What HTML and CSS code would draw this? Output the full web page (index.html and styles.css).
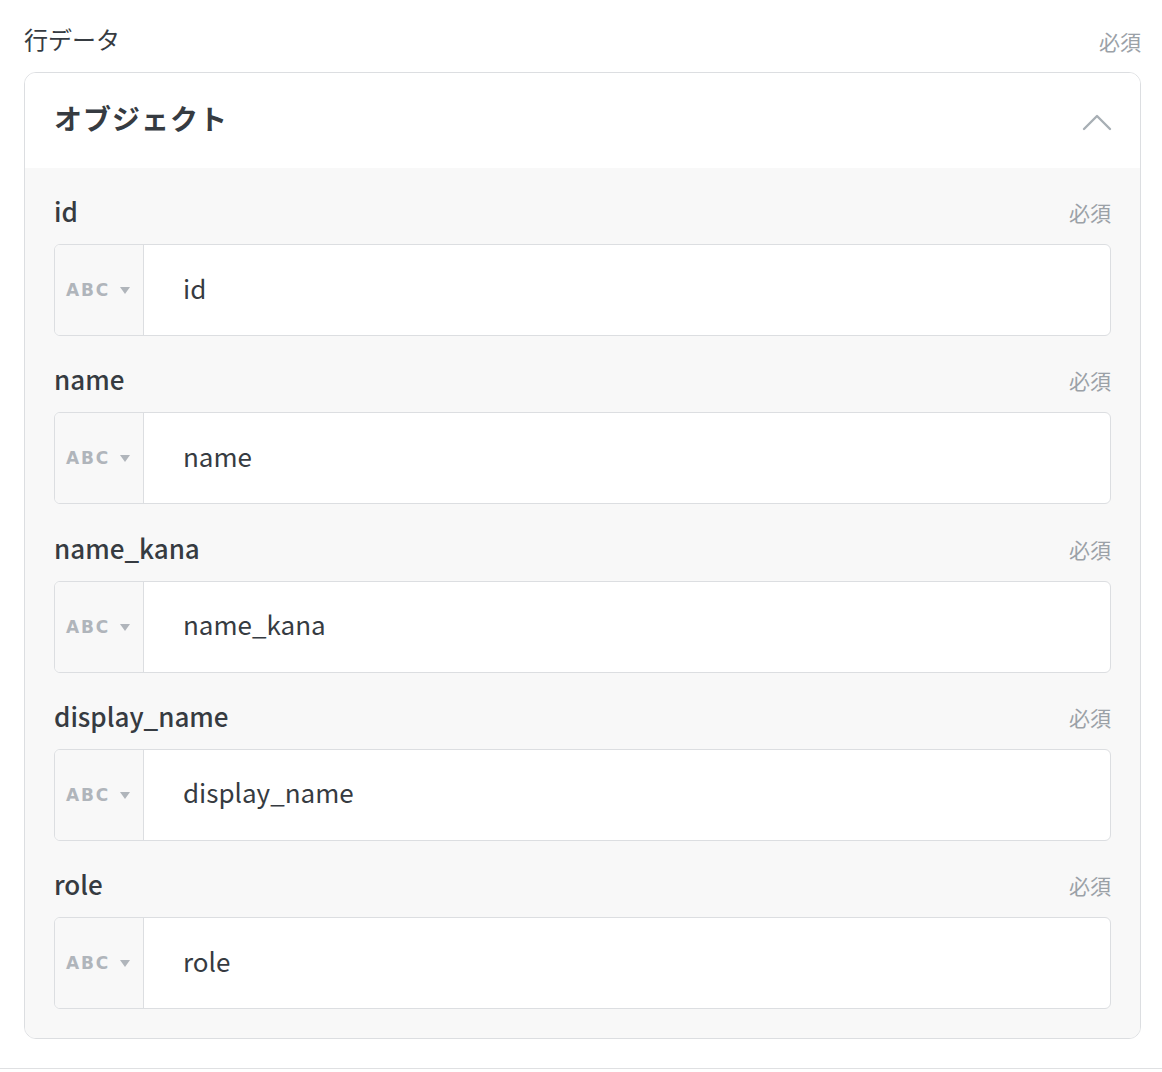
FILE: index.html
```html
<!DOCTYPE html>
<html lang="ja">
<head>
<meta charset="utf-8">
<link rel="stylesheet" href="styles.css">
</head>
<body>
<div class="page">
  <div class="top-row">
    <span class="title">行データ</span>
    <span class="req">必須</span>
  </div>
  <div class="card">
    <div class="card-head">
      <span class="card-title">オブジェクト</span>
      <svg class="chev" width="30" height="20" viewBox="0 0 30 20"><path d="M2 17 L15 4 L28 17" fill="none" stroke="#a8afb5" stroke-width="2.4" stroke-linecap="round" stroke-linejoin="round"/></svg>
    </div>
    <div class="card-body">
      <div class="field">
        <div class="field-head"><span class="label">id</span><span class="req">必須</span></div>
        <div class="input"><div class="type"><span class="abc">ABC</span><span class="tri"></span></div><div class="val">id</div></div>
      </div>
      <div class="field">
        <div class="field-head"><span class="label">name</span><span class="req">必須</span></div>
        <div class="input"><div class="type"><span class="abc">ABC</span><span class="tri"></span></div><div class="val">name</div></div>
      </div>
      <div class="field">
        <div class="field-head"><span class="label">name_kana</span><span class="req">必須</span></div>
        <div class="input"><div class="type"><span class="abc">ABC</span><span class="tri"></span></div><div class="val">name_kana</div></div>
      </div>
      <div class="field">
        <div class="field-head"><span class="label">display_name</span><span class="req">必須</span></div>
        <div class="input"><div class="type"><span class="abc">ABC</span><span class="tri"></span></div><div class="val">display_name</div></div>
      </div>
      <div class="field">
        <div class="field-head"><span class="label">role</span><span class="req">必須</span></div>
        <div class="input"><div class="type"><span class="abc">ABC</span><span class="tri"></span></div><div class="val">role</div></div>
      </div>
    </div>
  </div>
</div>
<div class="rule"></div>
</body>
</html>
```
FILE: styles.css
```css
* { box-sizing: border-box; }
body {
  margin: 0;
  background: #fff;
  font-family: "Noto Sans CJK JP", "Noto Sans", sans-serif;
  color: #363b41;
}
.page { padding: 22px 21px 0 24px; }
.top-row {
  display: flex;
  justify-content: space-between;
  align-items: center;
  height: 36px;
  margin-bottom: 14px;
}
.title { font-size: 24px; line-height: 36px; padding-bottom: 2px; }
.req { font-size: 21px; color: #9ba1a7; line-height: 36px; }
.top-row .req { padding-top: 2px; }
.card {
  border: 1px solid #dcdee1;
  border-radius: 12px;
  overflow: hidden;
}
.card-head {
  height: 95px;
  background: #fff;
  display: flex;
  align-items: center;
  justify-content: space-between;
  padding: 0 28px 0 29px;
}
.card-title { font-size: 28px; font-weight: 700; letter-spacing: 1px; padding-bottom: 6px; }
.chev { margin-top: 2px; }
.card-body {
  background: #f8f8f8;
  padding: 26px 29px 29px 29px;
  display: flex;
  flex-direction: column;
  gap: 26.25px;
}
.field-head {
  display: flex;
  justify-content: space-between;
  align-items: center;
  height: 36px;
  margin-bottom: 14px;
}
.label { font-size: 26px; font-weight: 500; line-height: 36px; padding-bottom: 2px; }
.field-head .req { padding-top: 0; }
.input {
  display: flex;
  height: 92px;
  border: 1px solid #dcdee1;
  border-radius: 6px;
  overflow: hidden;
  background: #fff;
}
.type {
  width: 89px;
  background: #f8f8f8;
  border-right: 1px solid #dcdee1;
  display: flex;
  align-items: center;
  padding-left: 11px;
  gap: 10px;
}
.abc {
  font-family: "DejaVu Sans", "Liberation Sans", sans-serif;
  font-weight: 700;
  font-size: 17px;
  letter-spacing: 1.8px;
  color: #b0b5bb;
}
.tri {
  width: 0; height: 0;
  border-left: 5px solid transparent;
  border-right: 5px solid transparent;
  border-top: 7px solid #b0b5bb;
  margin-top: 1px;
}
.val {
  display: flex;
  align-items: center;
  padding-left: 39px;
  padding-bottom: 6px;
  font-size: 26px;
  color: #363b41;
}
.rule {
  margin-top: 29px;
  border-top: 1px solid #dfe0e2;
}
```
